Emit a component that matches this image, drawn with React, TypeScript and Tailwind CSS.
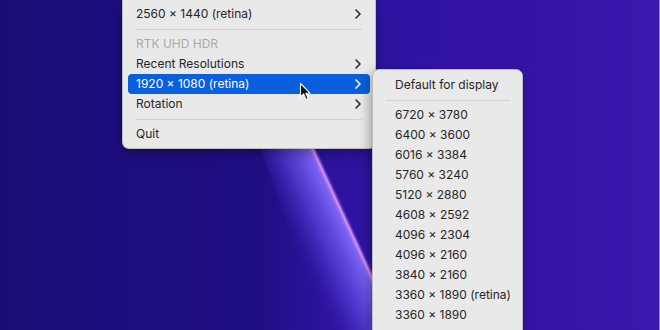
import type { ReactNode } from 'react';

const font = { fontFamily: 'Inter, "Noto Sans", sans-serif' };

function Chevron({ light }: { light?: boolean }) {
  return (
    <svg width="6" height="10" viewBox="0 0 6 10" className="shrink-0">
      <polyline
        points="1,1 5,5 1,9"
        fill="none"
        stroke={light ? '#ffffff' : '#2a2a2a'}
        strokeWidth="1.6"
        strokeLinecap="round"
        strokeLinejoin="round"
      />
    </svg>
  );
}

function Row({ children, sub, active, disabled }: { children: ReactNode; sub?: boolean; active?: boolean; disabled?: boolean }) {
  return (
    <div
      className={`mx-[5px] h-5 flex items-center justify-between pl-2 pr-[9px] rounded-[4px] ${
        active ? 'bg-[#0a5fdc] text-white' : disabled ? 'text-[#a9a9a9]' : 'text-[#262626]'
      }`}
    >
      <span>{children}</span>
      {sub && <Chevron light={active} />}
    </div>
  );
}

function SubRow({ children }: { children: ReactNode }) {
  return <div className="h-5 flex items-center pl-[22px] text-[#262626] whitespace-nowrap">{children}</div>;
}

function Separator({ className }: { className: string }) {
  return (
    <div className={`h-[10px] flex items-center ${className}`}>
      <div className="h-px w-full bg-[#d2d2d2]" />
    </div>
  );
}

function Wallpaper() {
  return (
    <svg className="absolute inset-0" width="660" height="330" viewBox="0 0 660 330">
      <defs>
        <linearGradient id="bg" x1="0" y1="0" x2="660" y2="0" gradientUnits="userSpaceOnUse">
          <stop offset="0" stopColor="#1a0e76" />
          <stop offset="0.4" stopColor="#1f0f86" />
          <stop offset="0.5" stopColor="#2e13a0" />
          <stop offset="0.8" stopColor="#3414a7" />
          <stop offset="1" stopColor="#3a18ad" />
        </linearGradient>
        <linearGradient id="wedge" x1="284" y1="224" x2="336" y2="200" gradientUnits="userSpaceOnUse">
          <stop offset="0" stopColor="#3b25b8" stopOpacity="0" />
          <stop offset="0.5" stopColor="#5640d6" stopOpacity="0.75" />
          <stop offset="0.9" stopColor="#7560f0" />
          <stop offset="1" stopColor="#8a66f2" />
        </linearGradient>
        <filter id="glow" x="-50%" y="-50%" width="200%" height="200%">
          <feGaussianBlur stdDeviation="1" />
        </filter>
      </defs>
      <rect width="660" height="330" fill="url(#bg)" />
      <polygon points="245,100 290,100 396,330 322,330" fill="url(#wedge)" />
      <line x1="290" y1="100" x2="396" y2="330" stroke="#c482f3" strokeWidth="3.5" filter="url(#glow)" />
      <line x1="290" y1="100" x2="396" y2="330" stroke="#d394f6" strokeWidth="1.2" />
      <rect x="659" y="0" width="1" height="330" fill="#8c84c8" />
    </svg>
  );
}

function Cursor() {
  return (
    <svg className="absolute left-[299px] top-[82px]" width="14" height="20" viewBox="0 0 14 20">
      <path
        d="M1.5 1.5 L1.5 15 L4.6 12 L7 17.6 L9.2 16.6 L6.9 11.2 L11 11.2 Z"
        fill="#111"
        stroke="#fff"
        strokeWidth="1.1"
        strokeLinejoin="round"
      />
    </svg>
  );
}

export default function App() {
  const resolutions = [
    '6720 × 3780',
    '6400 × 3600',
    '6016 × 3384',
    '5760 × 3240',
    '5120 × 2880',
    '4608 × 2592',
    '4096 × 2304',
    '4096 × 2160',
    '3840 × 2160',
    '3360 × 1890 (retina)',
    '3360 × 1890',
  ];

  return (
    <div className="relative w-[660px] h-[330px] overflow-hidden text-[12px]" style={font}>
      <Wallpaper />
      <div className="relative flex items-start pl-[122px]">
        <div className="w-[254px] pt-[4px] pb-[4px] bg-[#e9e9e9] rounded-b-[7px] border border-t-0 border-[#bdbdbd] shadow-[0_4px_14px_rgba(0,0,0,0.35)]">
          <Row sub>2560 × 1440 (retina)</Row>
          <Separator className="mx-[13px]" />
          <Row disabled>RTK UHD HDR</Row>
          <Row sub>Recent Resolutions</Row>
          <Row sub active>1920 × 1080 (retina)</Row>
          <Row sub>Rotation</Row>
          <Separator className="mx-[13px]" />
          <Row>Quit</Row>
        </div>
        <div className="-ml-[4px] mt-[69px] w-[151px] h-[300px] pt-[5px] bg-[#e9e9e9] rounded-[7px] border border-[#bdbdbd] shadow-[-2px_4px_12px_rgba(0,0,0,0.35)]">
          <SubRow>Default for display</SubRow>
          <Separator className="ml-[13px] mr-[12px]" />
          {resolutions.map((r) => (
            <SubRow key={r}>{r}</SubRow>
          ))}
        </div>
      </div>
      <Cursor />
    </div>
  );
}
